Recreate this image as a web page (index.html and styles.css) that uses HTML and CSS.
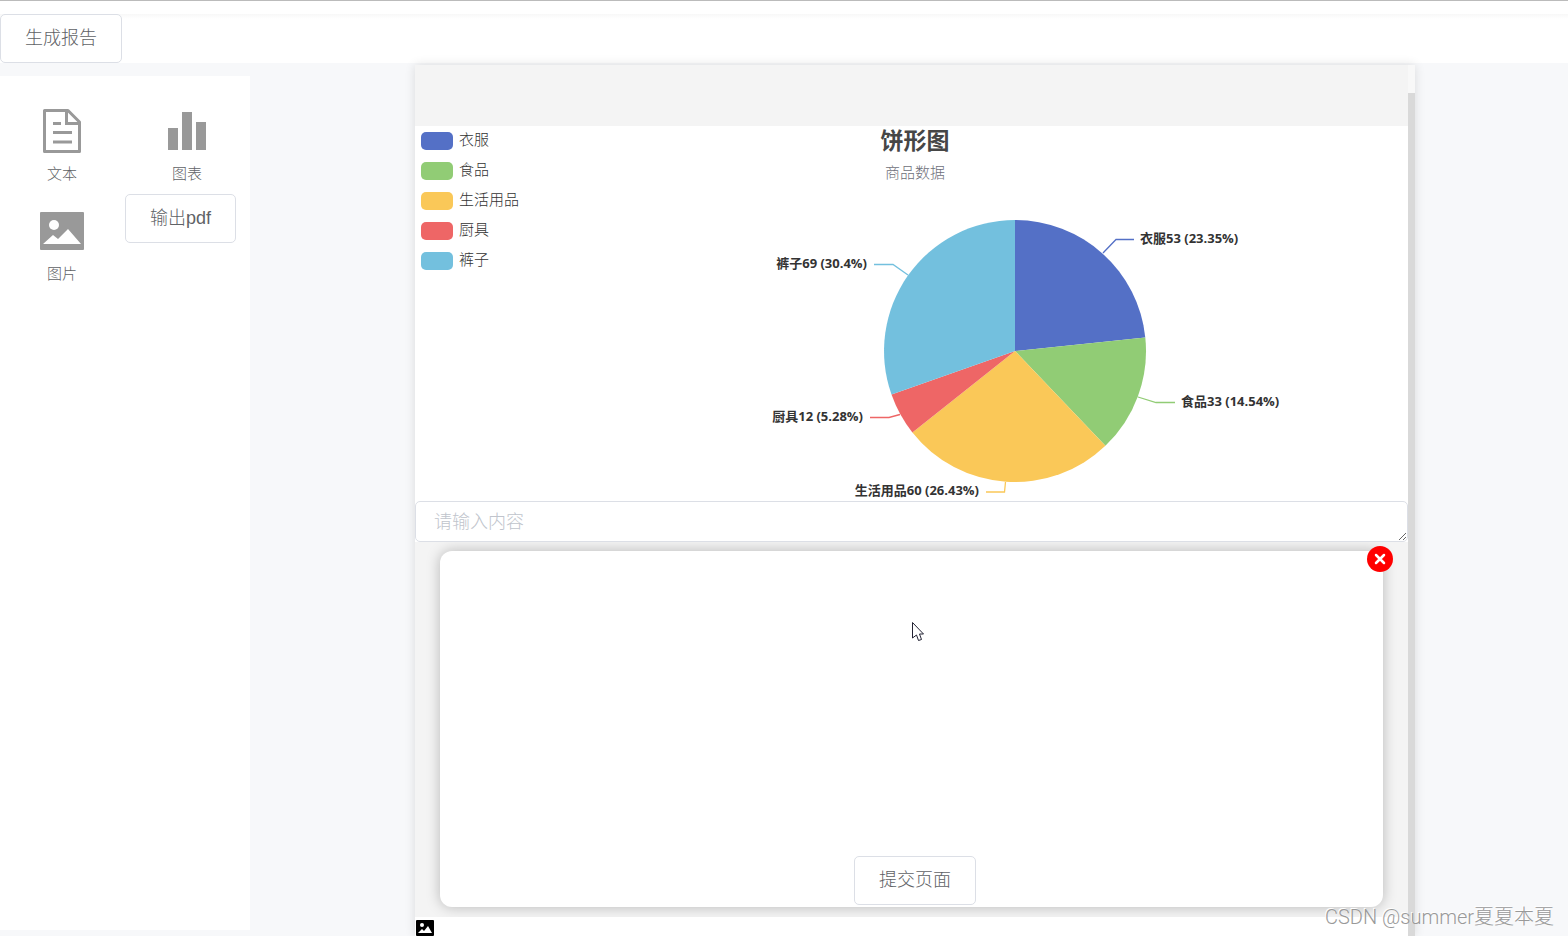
FILE: index.html
```
<!DOCTYPE html>
<html lang="zh-CN">
<head>
    <meta charset="UTF-8">
    <meta name="viewport" content="width=device-width, initial-scale=1.0">
    <title>生成报告</title>
    <link rel="stylesheet" href="styles.css">
</head>
<body>
    <header class="topbar">
        <button type="button" class="btn">生成报告</button>
    </header>

    <div class="container">
        <aside class="sidebar">
            <button type="button" class="tool">
                <svg class="tool-icon" viewBox="0 0 44 44">
                    <path d="M4.500 1.500H28L39.500 13V42.500H4.500Z" fill="none" stroke="#999" stroke-width="3" stroke-linejoin="round"/>
                    <path d="M26.500 2V14.500H39" fill="none" stroke="#999" stroke-width="3"/>
                    <path d="M13 14.500H21M13 23.500H32M13 33H32" stroke="#999" stroke-width="3"/>
                </svg>
                <span>文本</span>
            </button>
            <button type="button" class="tool">
                <svg class="tool-icon" viewBox="0 0 44 44">
                    <path d="M3 19H13V41H3ZM17 3H27V41H17ZM31 13H41V41H31Z" fill="#999"/>
                </svg>
                <span>图表</span>
            </button>
            <button type="button" class="tool">
                <svg class="tool-icon" viewBox="0 0 44 44">
                    <rect y="3" width="44" height="38" rx="1" fill="#999"/>
                    <circle cx="14" cy="16" r="5" fill="#fff"/>
                    <path d="M3 35L13 26L18 30L28 20L41 35Z" fill="#fff"/>
                </svg>
                <span>图片</span>
            </button>
            <div>
                <button type="button" class="btn">输出pdf</button>
            </div>
        </aside>

        <main class="main">
            <div class="paper">
                <div class="content">
                    <div class="page-head"></div>

                    <!-- 饼形图 -->
                    <section class="chart">
                        <svg class="pie" viewBox="0 0 993 375">
                            <path fill="#5470c6" d="M600 225V94A131 131 0 0 1 730.300 211.400Z"/>
                            <path fill="#91cc75" d="M600 225L730.300 211.400A131 131 0 0 1 690.400 319.800Z"/>
                            <path fill="#fac858" d="M600 225L690.400 319.800A131 131 0 0 1 497.400 306.500Z"/>
                            <path fill="#ee6666" d="M600 225L497.400 306.500A131 131 0 0 1 476.500 268.600Z"/>
                            <path fill="#73c0de" d="M600 225L476.500 268.600A131 131 0 0 1 600 94Z"/>
                            <g fill="none" stroke-width="1.300">
                                <path stroke="#5470c6" d="M688 127L701 113.500H719"/>
                                <path stroke="#91cc75" d="M723 271L741 276.500H760"/>
                                <path stroke="#fac858" d="M590.500 356L589.500 366H571"/>
                                <path stroke="#ee6666" d="M485 288.500L474 291.500H455"/>
                                <path stroke="#73c0de" d="M493 149L478 138.500H459"/>
                            </g>
                            <g class="pie-label">
                                <text x="725" y="117">衣服53 (23.35%)</text>
                                <text x="766" y="280">食品33 (14.54%)</text>
                                <text x="564" y="369" text-anchor="end">生活用品60 (26.43%)</text>
                                <text x="448" y="295" text-anchor="end">厨具12 (5.28%)</text>
                                <text x="452" y="142" text-anchor="end">裤子69 (30.4%)</text>
                            </g>
                        </svg>
                        <ul class="legend">
                            <li class="blue">衣服</li>
                            <li class="green">食品</li>
                            <li class="yellow">生活用品</li>
                            <li class="red">厨具</li>
                            <li class="cyan">裤子</li>
                        </ul>
                        <div class="chart-title">
                            <h2>饼形图</h2>
                            <p>商品数据</p>
                        </div>
                    </section>

                    <textarea class="text-input" rows="1" placeholder="请输入内容" aria-label="请输入内容"></textarea>

                    <section class="upload">
                        <div class="card">
                            <button type="button" class="close" aria-label="关闭">
                                <svg viewBox="0 0 26 26">
                                    <circle cx="13" cy="13" r="13" fill="#f00"/>
                                    <path d="M9 9L17 17M17 9L9 17" stroke="#fff" stroke-width="2.500" stroke-linecap="round"/>
                                </svg>
                            </button>
                            <button type="button" class="btn">提交页面</button>
                        </div>
                    </section>

                    <div class="page-foot">
                        <svg class="pic-icon" viewBox="0 0 18 16">
                            <rect width="18" height="16" rx="1"/>
                            <circle cx="6" cy="5" r="2" fill="#fff"/>
                            <path d="M2 13L6 9L8 11L12 6L16 13Z" fill="#fff"/>
                        </svg>
                    </div>
                </div>
                <div class="scrollbar"><div class="thumb"></div></div>
            </div>
        </main>
    </div>

    <svg class="cursor" viewBox="0 0 13 20">
        <path d="M0.500 0.500V16L4.500 13L6.500 18.500L9.500 17.500L7.500 12H11.500Z" fill="#fff" stroke="#223"/>
    </svg>
    <div class="watermark">CSDN @summer夏夏本夏</div>
</body>
</html>
```

FILE: styles.css
```
* {
    box-sizing: border-box;
}

body {
    font-family: "Liberation Sans", "Noto Sans CJK SC", sans-serif;
    font-weight: 300;
    background-color: #f7f8fa;
    color: #606266;
    margin: 0;
    height: 100vh;
    display: flex;
    flex-direction: column;
    position: relative;
    overflow: hidden;
}

button {
    font-family: inherit;
    font-weight: inherit;
    color: inherit;
    cursor: pointer;
}

.btn {
    height: 49px;
    padding: 0 24px 2px;
    font-size: 18px;
    line-height: 24px;
    background-color: #fff;
    border: 1px solid #dcdfe6;
    border-radius: 5px;
}

/* 顶部 */
.topbar {
    border-top: 1px solid #bbb;
    padding-top: 13px;
    height: 63px;
    flex: none;
    background: linear-gradient(#fff 13px, #f8f8f8 13px, #fff 18px);
}

.container {
    flex: 1;
    min-height: 0;
    display: flex;
    gap: 12px;
}

/* 左侧工具栏 */
.sidebar {
    width: 250px;
    flex: none;
    margin: 13px 0 6px;
    padding-top: 18px;
    background-color: #fff;
    display: grid;
    grid-template-columns: 1fr 1fr;
    grid-auto-rows: 100px;
    align-content: start;
}

.tool {
    display: flex;
    flex-direction: column;
    align-items: center;
    gap: 10px;
    padding: 15px 1px 0 0;
    border: none;
    background: none;
    font-size: 15px;
    line-height: 22px;
}

.tool-icon {
    width: 44px;
    height: 44px;
}

/* 报告页面 */
.main {
    flex: 1;
    min-width: 0;
    display: flex;
    justify-content: center;
    padding-top: 2px;
}

.paper {
    width: 100%;
    max-width: 1000px;
    display: flex;
    box-shadow: 0 0 10px rgba(0, 0, 0, 0.12);
}

.content {
    flex: 1;
    min-width: 0;
    display: flex;
    flex-direction: column;
    background-color: #fff;
    overflow: hidden;
}

.page-head {
    height: 61px;
    flex: none;
    background-color: #f4f4f4;
}

.scrollbar {
    width: 7px;
    padding-top: 28px;
    display: flex;
    background-color: #f8f8f8;
}

.thumb {
    flex: 1;
    background-color: #d9d9d9;
}

/* 图表 */
.chart {
    display: grid;
    flex: none;
}

.chart > * {
    grid-area: 1 / 1;
}

.pie {
    width: 100%;
    height: 375px;
}

.pie-label {
    font-family: "Open Sans", "Noto Sans CJK SC", sans-serif;
    font-size: 13px;
    font-weight: 700;
    fill: #333;
}

.legend {
    list-style: none;
    justify-self: start;
    margin: 0;
    padding: 0 6px;
    font-size: 15px;
    line-height: 28px;
    color: #333;
}

.legend li {
    display: flex;
    gap: 6px;
    height: 30px;
}

.legend li::before {
    content: '';
    width: 32px;
    height: 18px;
    margin-top: 6px;
    border-radius: 5px;
}

.legend .blue::before {
    background-color: #5470c6;
}

.legend .green::before {
    background-color: #91cc75;
}

.legend .yellow::before {
    background-color: #fac858;
}

.legend .red::before {
    background-color: #ee6666;
}

.legend .cyan::before {
    background-color: #73c0de;
}

.chart-title {
    justify-self: center;
    padding-left: 7px;
    text-align: center;
}

.chart-title h2 {
    margin: 0;
    font-size: 23px;
    line-height: 30px;
    color: #464646;
}

.chart-title p {
    margin: 5px 0 0;
    font-size: 15px;
    line-height: 24px;
    color: #6e7079;
}

/* 文本输入 */
.text-input {
    display: block;
    flex: none;
    width: 100%;
    height: 41px;
    padding: 7px 18px;
    border: 1px solid #dcdfe6;
    border-radius: 5px;
    outline: none;
    resize: vertical;
    overflow: hidden;
    font-family: inherit;
    font-weight: inherit;
    font-size: 18px;
    line-height: 26px;
    color: #606266;
}

.text-input::placeholder {
    color: #c0c4cc;
}

/* 提交区域 */
.upload {
    flex: none;
    padding: 9px 25px 10px;
    background-color: #f4f4f4;
    overflow: hidden;
}

.card {
    position: relative;
    height: 356px;
    padding: 0 0 2px 7px;
    display: flex;
    justify-content: center;
    align-items: flex-end;
    background-color: #fff;
    border-radius: 12px;
    box-shadow: 0 0 14px rgba(0, 0, 0, 0.25);
}

.close {
    position: absolute;
    top: -5px;
    right: -10px;
    width: 26px;
    height: 26px;
    padding: 0;
    border: none;
    background: none;
}

.close svg {
    display: block;
}

.page-foot {
    padding: 3px 1px;
}

.pic-icon {
    display: block;
    width: 18px;
    height: 16px;
}

.cursor {
    position: absolute;
    left: 912px;
    top: 622px;
    width: 13px;
    height: 20px;
}

.watermark {
    position: absolute;
    right: 14px;
    bottom: 4px;
    font-family: Roboto, "Noto Sans CJK SC", sans-serif;
    font-size: 20px;
    line-height: 30px;
    color: #999;
    text-shadow: -1px -1px 0 #fff;
}
```
